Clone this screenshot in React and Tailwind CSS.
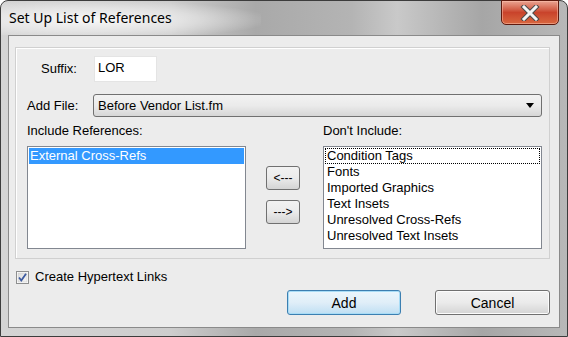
import React from 'react';

const rightItems = [
  'Condition Tags',
  'Fonts',
  'Imported Graphics',
  'Text Insets',
  'Unresolved Cross-Refs',
  'Unresolved Text Insets',
];

function SmallButton({ label }) {
  return (
    <div className="w-[34px] h-[24px] rounded-[3px] border border-[#707070] bg-gradient-to-b from-[#f2f2f2] via-[#ebebeb] to-[#d4d4d4] flex items-center justify-center text-[12px] leading-none">
      {label}
    </div>
  );
}

export default function App() {
  return (
    <div className="w-[568px] h-[337px] overflow-hidden bg-white" style={{ fontFamily: '"Liberation Sans", Arial, sans-serif' }}>
      <div className="relative w-[568px] h-[337px] rounded-t-[8px] border border-[#3c3c3c] bg-[linear-gradient(90deg,#d4d4d4_0%,#cdcdcd_30%,#a9a9a9_45%,#b4b4b4_62%,#c9c9c9_70%,#a6a6a6_85%,#b8b8b8_100%)] flex flex-col">
        {/* title bar */}
        <div className="h-[34px] flex items-start relative">
          <div className="absolute left-0 top-0 w-[260px] h-[34px] bg-[radial-gradient(ellipse_at_35%_55%,rgba(255,255,255,0.85)_0%,rgba(255,255,255,0.4)_45%,rgba(255,255,255,0)_75%)]" />
          <span className="relative pl-[8px] pt-[7px] text-[14px] leading-[20px] text-black" style={{ fontFamily: '"Noto Sans", "Open Sans", sans-serif' }}>
            Set Up List of References
          </span>
          <div className="absolute right-[8px] top-[-1px] w-[58px] h-[25px] rounded-b-[5px] border border-[#5e1a0e] bg-gradient-to-b from-[#e9a391] via-[#c9432b] to-[#d8673f] flex items-center justify-center shadow-[inset_0_0_0_1px_rgba(255,200,180,0.5)]">
            <svg width="20" height="16" viewBox="0 0 20 16">
              <path d="M4 2 L16 14 M16 2 L4 14" stroke="#4a4a4a" strokeWidth="5" strokeLinecap="square" />
              <path d="M4 2 L16 14 M16 2 L4 14" stroke="#f4f4f4" strokeWidth="3" strokeLinecap="square" />
            </svg>
          </div>
        </div>

        {/* client area */}
        <div className="mx-[7px] mb-[8px] flex-1 border border-[#8a8a8a] bg-[#ececec] flex flex-col text-[13px] leading-[16px] text-black">
          {/* group box */}
          <div className="ml-[6px] mt-[11px] w-[535px] h-[212px] border border-[#d0d0d0] shadow-[inset_1px_1px_0_#ffffff] pl-[11px] flex flex-col">
            <div className="mt-[8px] flex items-center">
              <div className="w-[67px] pl-[14px]">Suffix:</div>
              <div className="w-[63px] h-[26px] bg-white border border-[#e4e4e4] pl-[3px] pt-[3px]">LOR</div>
            </div>
            <div className="mt-[12px] flex items-center">
              <div className="w-[66px]">Add File:</div>
              <div className="w-[449px] h-[23px] rounded-[3px] border border-[#707070] bg-gradient-to-b from-[#f2f2f2] via-[#ebebeb] to-[#d6d6d6] flex items-center pl-[4px] pr-[7px]">
                <span className="flex-1">Before Vendor List.fm</span>
                <svg width="8" height="5" viewBox="0 0 8 5">
                  <path d="M0 0 L8 0 L4 5 Z" fill="#000" />
                </svg>
              </div>
            </div>
            <div className="mt-[6px] flex">
              <div className="w-[296px]">Include References:</div>
              <div>Don&apos;t Include:</div>
            </div>
            <div className="mt-[7px] flex">
              <div className="w-[219px] h-[103px] bg-white border border-[#828790] p-[1px]">
                <div className="h-[16px] bg-[#3399ff] text-white pl-[1px]">External Cross-Refs</div>
              </div>
              <div className="ml-[20px] mr-[23px] pt-[20px] flex flex-col gap-[10px]">
                <SmallButton label="<---" />
                <SmallButton label="--->" />
              </div>
              <div className="w-[219px] h-[103px] bg-white border border-[#828790] p-[1px]">
                {rightItems.map((item, i) => (
                  <div
                    key={item}
                    className={i === 0 ? 'h-[16px] pl-[1px] border border-dotted border-black leading-[14px]' : 'h-[16px] pl-[2px]'}
                  >
                    {item}
                  </div>
                ))}
              </div>
            </div>
          </div>

          {/* checkbox */}
          <div className="ml-[7px] mt-[10px] flex items-center">
            <svg width="13" height="13" viewBox="0 0 13 13">
              <defs>
                <linearGradient id="cb" x1="0" y1="0" x2="1" y2="1">
                  <stop offset="0" stopColor="#dcdcdc" />
                  <stop offset="1" stopColor="#f6f6f6" />
                </linearGradient>
              </defs>
              <rect x="0.5" y="0.5" width="12" height="12" fill="#ffffff" stroke="#8e8f8f" />
              <rect x="2" y="2" width="9" height="9" fill="url(#cb)" stroke="#c6c6c6" strokeWidth="0.5" />
              <path d="M3 6.5 L5.3 9.5 L10 2.8" stroke="#3c5aa0" strokeWidth="1.8" fill="none" />
            </svg>
            <span className="ml-[6px]">Create Hypertext Links</span>
          </div>

          {/* buttons */}
          <div className="mt-[5px] mr-[9px] flex justify-end gap-[34px]">
            <div className="w-[114px] h-[25px] rounded-[3px] border border-[#3c7fb1] bg-gradient-to-b from-[#eaf6fd] via-[#e0eef8] to-[#bfdff3] shadow-[inset_0_0_0_1px_#a8dcf6] flex items-center justify-center text-[14px]">
              Add
            </div>
            <div className="w-[115px] h-[25px] rounded-[3px] border border-[#707070] bg-gradient-to-b from-[#f2f2f2] via-[#ebebeb] to-[#d4d4d4] shadow-[inset_0_0_0_1px_#fcfcfc] flex items-center justify-center text-[14px]">
              Cancel
            </div>
          </div>
        </div>
      </div>
    </div>
  );
}
